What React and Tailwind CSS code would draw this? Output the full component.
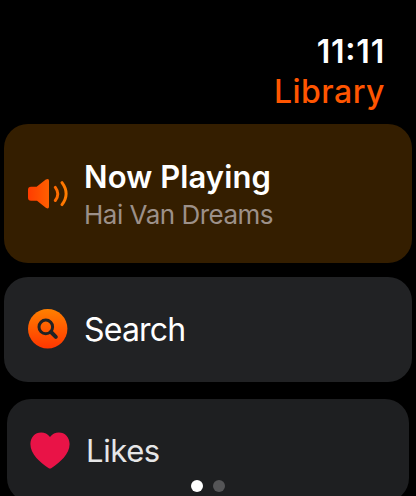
import clsx from 'clsx';

const PAGES = ['library', 'player'];

export default function App() {
  return (
    <div className="w-[416px] h-[496px] overflow-hidden bg-black text-white font-['Inter','Roboto',sans-serif] relative">
      <header className="h-[124px] pt-8 pr-[31px] text-right text-[32px] leading-10">
        <div className="font-semibold tracking-[0.8px] [font-feature-settings:'case']">11:11</div>
        <h1 className="text-[#ff5500] font-medium tracking-[0.5px]">Library</h1>
      </header>

      <main className="px-1">
        <Card className="h-[139px] bg-[#341e00] rounded-[24px] mb-3.5">
          <SpeakerIcon />
          <div className="pt-[7px]">
            <p className="text-[31px] leading-9 font-semibold tracking-[0.1px]">Now Playing</p>
            <p className="text-[26px] leading-10 text-[#9c9089] tracking-[-0.5px]">Hai Van Dreams</p>
          </div>
        </Card>

        <Card className="h-[105px] bg-[#212224] rounded-[24px] mb-[17px]">
          <SearchIcon />
          <p className="text-[32px] leading-10 tracking-[-0.8px]">Search</p>
        </Card>

        <Card className="h-[103px] mx-[3px] bg-[#1e1f21] rounded-[24px]">
          <HeartIcon />
          <p className="text-[31px] leading-10 text-[#e6e6e7] tracking-[-0.4px]">Likes</p>
        </Card>
      </main>

      {/* Page dots */}
      <div className="absolute left-[191px] top-[480px] flex gap-2.5">
        {PAGES.map((page, i) => (
          <span key={page} className={clsx('size-3 rounded-full', i === 0 ? 'bg-white' : 'bg-[#555557]')} />
        ))}
      </div>
    </div>
  );
}

function Card({ className, children }) {
  return <div className={clsx('flex items-center gap-4 pl-6', className)}>{children}</div>;
}

function SpeakerIcon() {
  return (
    <svg width="40" height="32" viewBox="0 0 40 32" className="shrink-0">
      <defs>
        <linearGradient id="speaker" gradientUnits="userSpaceOnUse" x1="0" y1="0" x2="40" y2="0">
          <stop offset="0" stopColor="#ff3c00" />
          <stop offset="1" stopColor="#ff8000" />
        </linearGradient>
      </defs>
      <path
        d="M3 8.8H8.6L17.8 1.6Q21 -0.2 21 2.8V28.6Q21 31.6 17.8 29.8L9 22.8H3Q0 22.8 0 19.8V11.8Q0 8.8 3 8.8Z"
        fill="url(#speaker)"
      />
      <path
        d="M27.3 9.3Q32.3 15.9 27.3 22.5M34 4.6Q42.2 15.7 34 26.6"
        fill="none"
        stroke="url(#speaker)"
        strokeWidth="2.9"
        strokeLinecap="round"
      />
    </svg>
  );
}

function SearchIcon() {
  return (
    <svg width="40" height="40" viewBox="0 0 40 40" className="shrink-0 mb-px">
      <defs>
        <linearGradient id="search" x1="0" y1="0" x2="0" y2="1">
          <stop offset="0" stopColor="#ff8000" />
          <stop offset="1" stopColor="#ff3600" />
        </linearGradient>
      </defs>
      <circle cx="19.7" cy="19.7" r="19.7" fill="url(#search)" />
      <circle cx="17.8" cy="17.9" r="6.8" fill="none" stroke="#212224" strokeWidth="3" />
      <path d="M23 23L27.8 27.8" stroke="#212224" strokeWidth="4" strokeLinecap="round" />
    </svg>
  );
}

function HeartIcon() {
  return (
    <svg width="40" height="37" viewBox="0 0 40 38" preserveAspectRatio="none" className="shrink-0 -ml-px">
      <path
        d="M20 5.2C17.6 1.8 14.6 0.5 11.2 0.5C5 0.5 0.4 5.4 0.4 12.4C0.4 22.5 10 31.5 18.4 36.9Q20 38 21.6 36.9C30 31.5 39.6 22.5 39.6 12.4C39.6 5.4 35 0.5 28.8 0.5C25.4 0.5 22.4 1.8 20 5.2Z"
        fill="#e91347"
      />
    </svg>
  );
}
